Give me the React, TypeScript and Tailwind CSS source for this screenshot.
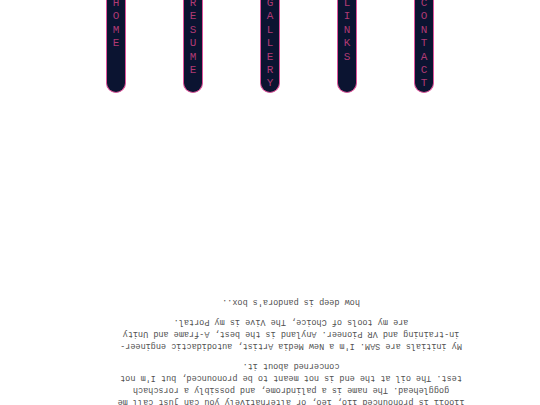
import React from "react";

const tabs = ["HOME", "RESUME", "GALLERY", "LINKS", "CONTACT"];

function NavTab({ label }: { label: string }) {
  return (
    <a
      href="#"
      className="flex h-[97px] w-[20px] flex-col items-center rounded-b-full border border-t-0 border-[#e0559c] bg-[#0b1431] pt-[1px]"
    >
      {label.split("").map((ch, i) => (
        <span key={i} className="block text-[11px] leading-[13.4px] text-[#b03a74]">
          {ch}
        </span>
      ))}
    </a>
  );
}

export default function App() {
  return (
    <div className="h-[405px] w-[540px] overflow-hidden bg-white font-['Liberation_Mono',monospace]">
      {/* tabs hanging from the top edge */}
      <nav className="-mt-[4px] flex justify-center gap-[57px]">
        {tabs.map((t) => (
          <NavTab key={t} label={t} />
        ))}
      </nav>

      {/* about text, upside down */}
      <div className="ml-[71px] mt-[203px] w-[440px] rotate-180 text-center text-[8.5px] leading-[12px] text-[#505050]">
        <p>
          iioo11 is pronounced iio, ieo, or alternatively you can just call me
          <br />
          gogglehead. The name is a palindrome, and possibly a rorschach
          <br />
          test. The oil at the end is not meant to be pronounced, but I'm not
          <br />
          concerned about it.
        </p>
        <p className="mt-[8px]">
          My initials are SAM. I'm a New Media Artist, autodidactic engineer-
          <br />
          in-training and VR Pioneer. Anyland is the best, A-frame and Unity
          <br />
          are my tools of Choice, The Vive is my Portal.
        </p>
        <p className="mt-[8px]">how deep is pandora's box..</p>
      </div>
    </div>
  );
}
